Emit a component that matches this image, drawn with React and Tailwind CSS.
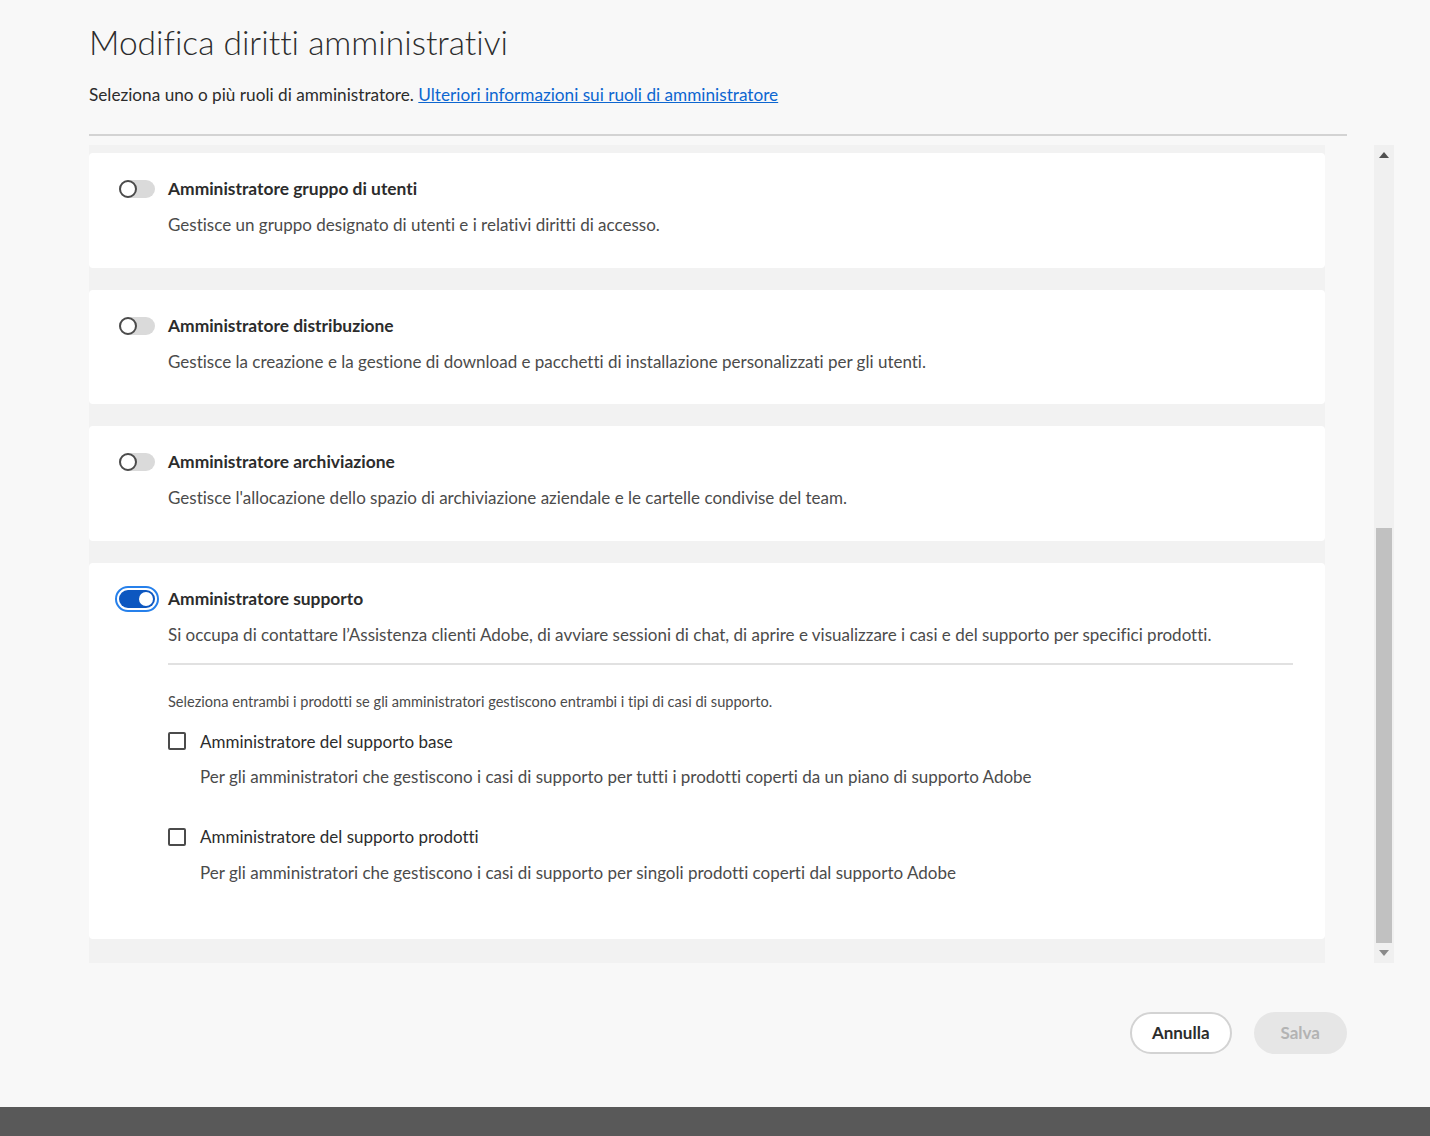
import React, { useState } from 'react';

const roles = [
  {
    id: 'group',
    title: 'Amministratore gruppo di utenti',
    desc: 'Gestisce un gruppo designato di utenti e i relativi diritti di accesso.',
  },
  {
    id: 'deploy',
    title: 'Amministratore distribuzione',
    desc: 'Gestisce la creazione e la gestione di download e pacchetti di installazione personalizzati per gli utenti.',
  },
  {
    id: 'storage',
    title: 'Amministratore archiviazione',
    desc: "Gestisce l'allocazione dello spazio di archiviazione aziendale e le cartelle condivise del team.",
  },
];

function Toggle({ on, onChange }) {
  if (on) {
    return (
      <button
        onClick={onChange}
        className="shrink-0 w-[44px] h-[26px] rounded-full border-2 border-[#2680eb] p-[2px] flex"
      >
        <span className="w-full h-full rounded-full bg-[#0d57c0] flex items-center justify-end pr-[2px]">
          <span className="w-[14px] h-[14px] rounded-full bg-white" />
        </span>
      </button>
    );
  }
  return (
    <button onClick={onChange} className="shrink-0 w-[44px] h-[26px] flex items-center px-[4px]">
      <span className="relative w-[36px] h-[18px] rounded-full bg-[#dadada]">
        <span className="absolute left-0 top-0 w-[18px] h-[18px] rounded-full bg-white border-2 border-[#4b4b4b]" />
      </span>
    </button>
  );
}

function Checkbox({ label, desc }) {
  return (
    <div>
      <label className="flex items-center gap-[14px] h-[26px]">
        <span className="w-[18px] h-[18px] rounded-[2px] border-2 border-[#4b4b4b] bg-white" />
        <span className="text-[17px] text-[#2c2c2c]">{label}</span>
      </label>
      <p className="ml-[32px] mt-[10px] text-[17px] text-[#4b4b4b]">{desc}</p>
    </div>
  );
}

function RoleCard({ role, on, onToggle, children }) {
  return (
    <div className="bg-white rounded-[4px] px-[26px] pt-[23px] pb-[30px]">
      <div className="flex items-center gap-[9px]">
        <Toggle on={on} onChange={onToggle} />
        <h3 className="text-[17.4px] font-bold text-[#2c2c2c]">{role.title}</h3>
      </div>
      <p className="ml-[53px] mt-[10px] text-[17px] text-[#4b4b4b]">{role.desc}</p>
      {children}
    </div>
  );
}

export default function App() {
  const [enabled, setEnabled] = useState({ support: true });
  const flip = (id) => setEnabled((s) => ({ ...s, [id]: !s[id] }));

  return (
    <div
      className="w-[1430px] h-[1136px] bg-[#f8f8f8] flex flex-col text-[#2c2c2c] [font-variant-ligatures:none]"
      style={{ fontFamily: '"Lato", "Open Sans", sans-serif' }}
    >
      <div className="flex-1 flex flex-col pl-[89px] pr-[36px] pt-[21px]">
        <h1 className="text-[33.5px] font-light leading-[42px] text-[#2c2c2c]">Modifica diritti amministrativi</h1>
        <p className="mt-[21px] text-[17.2px] leading-[22px]">
          Seleziona uno o più ruoli di amministratore.{' '}
          <a href="#" className="text-[#0d66d0] underline">Ulteriori informazioni sui ruoli di amministratore</a>
        </p>
        <div className="mt-[28px] h-[2px] w-[1258px] bg-[#d3d3d3]" />

        <div className="mt-[9px] flex gap-[49px]">
          <div className="shrink-0 w-[1236px] h-[818px] bg-[#f2f2f2] pt-[8px] flex flex-col gap-[22px] overflow-hidden">
            {roles.map((r) => (
              <RoleCard key={r.id} role={r} on={!!enabled[r.id]} onToggle={() => flip(r.id)} />
            ))}
            <RoleCard
              role={{
                title: 'Amministratore supporto',
                desc: 'Si occupa di contattare l’Assistenza clienti Adobe, di avviare sessioni di chat, di aprire e visualizzare i casi e del supporto per specifici prodotti.',
              }}
              on={!!enabled.support}
              onToggle={() => flip('support')}
            >
              <div className="ml-[53px] mr-[6px] mt-[16px] h-[2px] bg-[#e1e1e1]" />
              <div className="ml-[53px] pt-[26px] pb-[24px]">
                <p className="text-[14.6px] text-[#4b4b4b]">
                  Seleziona entrambi i prodotti se gli amministratori gestiscono entrambi i tipi di casi di supporto.
                </p>
                <div className="mt-[15px] flex flex-col gap-[34px]">
                  <Checkbox
                    label="Amministratore del supporto base"
                    desc="Per gli amministratori che gestiscono i casi di supporto per tutti i prodotti coperti da un piano di supporto Adobe"
                  />
                  <Checkbox
                    label="Amministratore del supporto prodotti"
                    desc="Per gli amministratori che gestiscono i casi di supporto per singoli prodotti coperti dal supporto Adobe"
                  />
                </div>
              </div>
            </RoleCard>
          </div>

          <div className="shrink-0 w-[20px] h-[818px] bg-[#f0f0f0] flex flex-col items-center">
            <div className="h-[20px] flex items-center justify-center">
              <span className="w-0 h-0 border-l-[5px] border-r-[5px] border-b-[6px] border-l-transparent border-r-transparent border-b-[#505050]" />
            </div>
            <div className="flex-1 w-full flex flex-col">
              <div className="h-[363px]" />
              <div className="w-[16px] mx-auto h-[415px] bg-[#c1c1c1]" />
            </div>
            <div className="h-[20px] flex items-center justify-center">
              <span className="w-0 h-0 border-l-[5px] border-r-[5px] border-t-[6px] border-l-transparent border-r-transparent border-t-[#8a8a8a]" />
            </div>
          </div>
        </div>

        <div className="mt-[49px] w-[1258px] flex justify-end gap-[22px]">
          <button className="h-[42px] px-[20px] rounded-full border-2 border-[#d3d3d3] bg-white text-[17px] font-bold text-[#2c2c2c]">
            Annulla
          </button>
          <button className="h-[42px] px-[27px] rounded-full bg-[#e6e6e6] text-[17px] font-bold text-[#b3b3b3]">
            Salva
          </button>
        </div>
      </div>
      <div className="h-[29px] bg-[#595959]" />
    </div>
  );
}
